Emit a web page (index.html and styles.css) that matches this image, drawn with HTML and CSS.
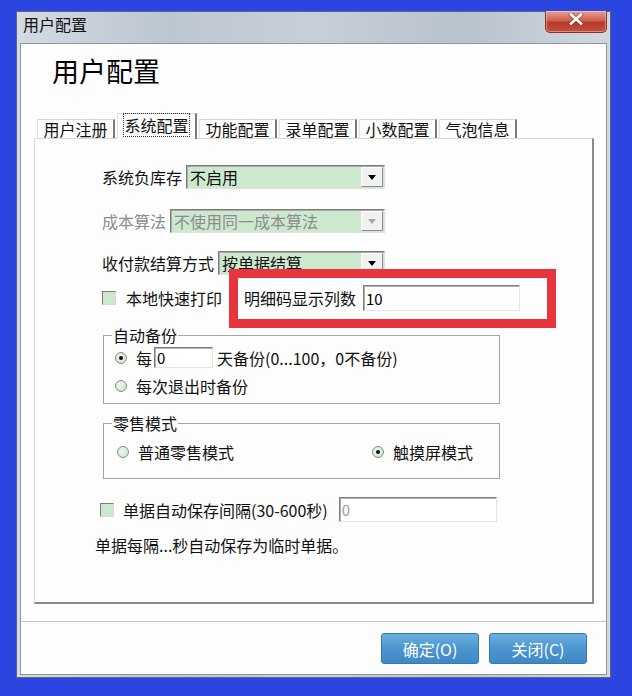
FILE: index.html
```html
<!DOCTYPE html>
<html lang="zh-CN">
<head>
  <meta charset="UTF-8" />
  <title>用户配置</title>
  <link rel="stylesheet" href="styles.css">
</head>
<body>
  <div class="window">
    <div class="titlebar">
      <span class="caption">用户配置</span>
      <button class="close-btn" aria-label="关闭">
        <svg width="16" height="12" viewBox="0 0 16 12">
          <path d="M3 1.5 L13 10.5 M13 1.5 L3 10.5" stroke="#6b2219" stroke-width="4" stroke-linecap="square" opacity="0.5"/>
          <path d="M3 1.5 L13 10.5 M13 1.5 L3 10.5" stroke="#fff" stroke-width="2.6" stroke-linecap="square"/>
        </svg>
      </button>
    </div>

    <div class="client">
      <h1>用户配置</h1>

      <div class="tabs">
        <div class="tab">用户注册</div>
        <div class="tab active"><span>系统配置</span></div>
        <div class="tab">功能配置</div>
        <div class="tab">录单配置</div>
        <div class="tab">小数配置</div>
        <div class="tab">气泡信息</div>
      </div>

      <div class="panel">
        <div class="row">
          <label>系统负库存</label>
          <div class="combo"><span>不启用</span><i class="drop"></i></div>
        </div>

        <div class="row mt20 disabled">
          <label>成本算法</label>
          <div class="combo"><span>不使用同一成本算法</span><i class="drop"></i></div>
        </div>

        <div class="row mt18">
          <label>收付款结算方式</label>
          <div class="combo"><span>按单据结算</span><i class="drop"></i></div>
        </div>

        <div class="line mt10">
          <i class="check"></i>
          <span class="check-text">本地快速打印</span>
          <div class="detail">
            <label>明细码显示列数</label>
            <input class="field detail-input" type="text" value="10">
            <div class="mark"></div>
          </div>
        </div>

        <fieldset class="group backup">
          <legend>自动备份</legend>
          <div class="opt">
            <i class="radio on"></i>
            <span>每</span>
            <input class="field days" type="text" value="0">
            <span class="after">天备份(0...100，0不备份)</span>
          </div>
          <div class="opt mt7">
            <i class="radio"></i>
            <span>每次退出时备份</span>
          </div>
        </fieldset>

        <fieldset class="group retail">
          <legend>零售模式</legend>
          <div class="opts">
            <div class="opt"><i class="radio"></i><span>普通零售模式</span></div>
            <div class="opt"><i class="radio on"></i><span>触摸屏模式</span></div>
          </div>
        </fieldset>

        <div class="line autosave">
          <i class="check"></i>
          <span class="check-text">单据自动保存间隔(30-600秒)</span>
          <input class="field secs" type="text" value="0" disabled>
        </div>

        <p class="hint">单据每隔...秒自动保存为临时单据。</p>
      </div>

      <div class="sep"></div>

      <div class="buttons">
        <button class="btn">确定(O)</button>
        <button class="btn">关闭(C)</button>
      </div>
    </div>
  </div>
</body>
</html>
```

FILE: styles.css
```css
body {
  margin: 0;
  background: #2b46e0;
  font-family: "Noto Sans CJK SC", "Noto Sans", sans-serif;
  font-size: 16px;
  color: #111;
}
.window {
  width: 595px;
  height: 667px;
  margin: 11px 0 0 16px;
  box-sizing: border-box;
  border: 1px solid #5d6772;
  background: linear-gradient(90deg, #d3dae2, #bcc6d1 25%, #c7cfd8 50%, #b8c2cd 75%, #d0d7df);
  padding: 0 3px 2px;
  display: flex;
  flex-direction: column;
}
.titlebar {
  height: 31px;
  display: flex;
  justify-content: space-between;
  align-items: flex-start;
  flex-shrink: 0;
}
.caption {
  margin-left: 3px;
  line-height: 25px;
  font-size: 16px;
  color: #111;
}
.close-btn {
  width: 62px;
  height: 22px;
  margin-top: -1px;
  padding: 2px 0 0;
  border: 1px solid #8a3126;
  border-top: none;
  border-radius: 0 0 5px 5px;
  background: linear-gradient(#e7a194, #d0604f 45%, #b63b2b 55%, #c45040);
  display: flex;
  justify-content: center;
  align-items: flex-start;
  box-shadow: inset 0 0 0 1px rgba(255,255,255,0.35);
}
.client {
  flex: 1;
  background: #fdfdfd;
  border: 1px solid #8d97a2;
  display: flex;
  flex-direction: column;
}
h1 {
  margin: 12px 0 0 31px;
  font-size: 27px;
  font-weight: normal;
  line-height: 30px;
  color: #000;
}
.tabs {
  display: flex;
  align-items: flex-end;
  gap: 2px;
  height: 25px;
  margin: 27px 0 0 16px;
  position: relative;
  z-index: 1;
}
.tab {
  width: 78px;
  height: 19px;
  box-sizing: border-box;
  text-align: center;
  line-height: 18px;
  background: #fdfdfd;
  border-top: 1px solid #d6d6d6;
  border-left: 1px solid #e2e2e2;
  border-right: 2px solid #7b7b7b;
}
.tab.active {
  width: 80px;
  height: 26px;
  margin-bottom: -1px;
  line-height: 22px;
}
.tab.active span {
  outline: 1px dotted #333;
  outline-offset: -1px;
  padding: 0 1px;
}
.panel {
  height: 466px;
  box-sizing: border-box;
  margin: 0 12px 0 13px;
  border: 1px solid #d8d8d8;
  border-right: 2px solid #8a8a8a;
  border-bottom: 2px solid #8a8a8a;
  padding: 26px 0 0 67px;
}
.row {
  display: flex;
  align-items: center;
  width: 283px;
  height: 24px;
}
.row label {
  margin-right: 4px;
  white-space: nowrap;
}
.mt20 { margin-top: 20px; }
.mt18 { margin-top: 18px; }
.mt10 { margin-top: 10px; }
.mt7 { margin-top: 7px; }
.combo {
  flex: 1;
  height: 24px;
  box-sizing: border-box;
  display: flex;
  background: #cde9cd;
  border: 1px solid;
  border-color: #7d7d7d #e0e0e0 #e0e0e0 #7d7d7d;
  box-shadow: inset 1px 1px 0 #a8a8a8;
}
.combo span {
  flex: 1;
  padding-left: 3px;
  line-height: 22px;
  white-space: nowrap;
  overflow: hidden;
}
.drop {
  width: 20px;
  margin: 1px 1px 1px 0;
  background: #f1f1f1;
  border: 1px solid;
  border-color: #fff #8a8a8a #8a8a8a #fff;
  display: flex;
  align-items: center;
  justify-content: center;
}
.drop::after {
  content: "";
  border-left: 4px solid transparent;
  border-right: 4px solid transparent;
  border-top: 5px solid #000;
}
.disabled label,
.disabled .combo span {
  color: #8c8c8c;
}
.disabled .drop::after {
  border-top-color: #a6a6a6;
}
.line {
  display: flex;
  align-items: center;
  height: 26px;
}
.check {
  width: 14px;
  height: 14px;
  box-sizing: border-box;
  background: #cde9cd;
  border: 1px solid;
  border-color: #7d7d7d #d8d8d8 #d8d8d8 #7d7d7d;
  flex-shrink: 0;
}
.check-text {
  margin-left: 10px;
  white-space: nowrap;
}
.detail {
  position: relative;
  display: flex;
  align-items: center;
  gap: 7px;
  margin-left: 22px;
  z-index: 2;
}
.field {
  box-sizing: border-box;
  font: 15px "Noto Sans CJK SC", sans-serif;
  color: #000;
  background: #fff;
  padding: 0 2px;
  border: 1px solid;
  border-color: #7d7d7d #e3e3e3 #e3e3e3 #7d7d7d;
  box-shadow: inset 1px 1px 0 #b0b0b0;
  outline: none;
}
.detail-input {
  width: 157px;
  height: 26px;
}
.mark {
  position: absolute;
  left: -15px;
  top: -16px;
  right: -36px;
  bottom: -17px;
  border: 9px solid #e8343c;
  pointer-events: none;
}
.group {
  width: 397px;
  box-sizing: border-box;
  margin: 16px 0 0 1px;
  border: 1px solid #a4a4a4;
  min-inline-size: 0;
}
.group legend {
  margin-left: 8px;
  padding: 0 1px;
  line-height: 16px;
}
.backup {
  padding: 4px 0 6px 0;
}
.backup .opt {
  padding-left: 11px;
}
.backup .opt:first-of-type {
  height: 21px;
}
.retail {
  margin-top: 11px;
  padding: 10px 0 15px 0;
}
.opts {
  display: flex;
  justify-content: space-between;
  padding: 0 26px 0 13px;
}
.opt {
  display: flex;
  align-items: center;
  height: 22px;
  line-height: 18px;
  white-space: nowrap;
}
.radio {
  width: 12px;
  height: 12px;
  box-sizing: border-box;
  border-radius: 50%;
  border: 1px solid #8c8c8c;
  background: radial-gradient(circle at 40% 40%, #eef8ee, #c3e3c3);
  margin-right: 9px;
  display: flex;
  align-items: center;
  justify-content: center;
  flex-shrink: 0;
}
.radio.on::after {
  content: "";
  width: 4px;
  height: 4px;
  border-radius: 50%;
  background: #111;
}
.days {
  width: 59px;
  height: 21px;
  margin-left: 2px;
}
.after {
  margin-left: 4px;
}
.autosave {
  margin: 18px 0 0 -2px;
  height: 25px;
}
.autosave .check-text {
  margin-left: 9px;
}
.secs {
  width: 158px;
  height: 25px;
  margin-left: 11px;
  color: #a0a0a0;
}
.hint {
  margin: 13px 0 0 -7px;
  line-height: 20px;
}
.sep {
  height: 1px;
  background: #c6c6c6;
  margin-top: 17px;
}
.buttons {
  display: flex;
  justify-content: flex-end;
  gap: 10px;
  margin-top: 11px;
  padding-right: 19px;
}
.btn {
  width: 98px;
  height: 31px;
  border: 1px solid #3a77ab;
  border-radius: 3px;
  background: linear-gradient(#6cb0e0, #4b95d0 50%, #3d88c6);
  color: #fff;
  font: 16px "Noto Sans CJK SC", sans-serif;
  cursor: pointer;
}
.btn:hover {
  background: linear-gradient(#7bbbe6, #55a0d8 50%, #4791ce);
}
```
